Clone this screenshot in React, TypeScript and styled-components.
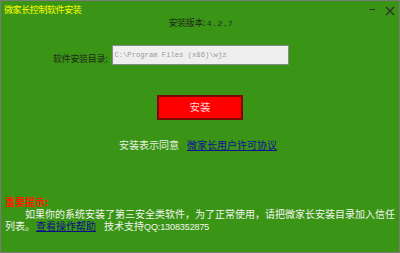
import React from 'react'
import styled, { createGlobalStyle } from 'styled-components'

const GlobalStyle = createGlobalStyle`
	html, body {
		margin: 0;
		padding: 0;
		background: #3a9416;
	}
	body {
		font-family: 'Noto Sans CJK SC', 'Liberation Sans', sans-serif;
	}
`

const Window = styled.div`
	width: 400px;
	height: 253px;
	box-sizing: border-box;
	border: 1px solid #7b7b7b;
	background: #3a9416;
	display: flex;
	flex-direction: column;
	overflow: hidden;
`

const TitleBar = styled.div`
	display: flex;
	justify-content: space-between;
	align-items: flex-start;
	padding: 3px 4px 0 3px;
	height: 12px;
`

const Title = styled.div`
	color: #ffff00;
	font-size: 9px;
	line-height: 12px;
	letter-spacing: -0.4px;
	white-space: nowrap;
`

const Controls = styled.div`
	display: flex;
	align-items: flex-start;
	gap: 9px;
	padding-top: 2px;
`

const Version = styled.div`
	text-align: center;
	font-size: 9px;
	line-height: 14px;
	letter-spacing: -0.4px;
	color: #1f2a18;
	padding-left: 2px;
`

const Mono = styled.span`
	font-family: 'Liberation Mono', monospace;
	font-size: 8px;
	letter-spacing: 0.5px;
`

const DirRow = styled.div`
	display: flex;
	align-items: flex-start;
	gap: 5px;
	margin-top: 14px;
	padding-left: 52px;
`

const Label = styled.div`
	font-size: 9px;
	line-height: 14px;
	letter-spacing: -0.3px;
	color: #1f2a18;
	margin-top: 7px;
	white-space: nowrap;
`

const PathBox = styled.div`
	width: 177px;
	height: 20px;
	box-sizing: border-box;
	border: 1px solid #8a8a8a;
	background: #efefef;
	color: #9a9a9a;
	font-family: 'Liberation Mono', monospace;
	font-size: 7.2px;
	line-height: 18px;
	padding-left: 1px;
	padding-bottom: 2px;
	white-space: nowrap;
	overflow: hidden;
`

const InstallButton = styled.button`
	display: block;
	margin: 29px auto 0;
	width: 86px;
	height: 25px;
	box-sizing: border-box;
	border: 2px solid #7d0a00;
	background: #ff0000;
	color: #ffd6d6;
	font-family: 'Noto Sans CJK SC', sans-serif;
	font-size: 10.5px;
	padding: 0 0 2px;
	cursor: pointer;
`

const Agreement = styled.div`
	display: flex;
	justify-content: center;
	gap: 8px;
	margin-top: 18px;
	font-size: 10px;
	line-height: 14px;
	color: #e9f1e2;
	padding-right: 4px;
`

const Link = styled.a<{ $dark?: boolean }>`
	color: ${({ $dark }) => ($dark ? '#0c0c86' : '#101092')};
	text-decoration: underline;
	cursor: pointer;
`

const Notice = styled.div`
	margin-top: 44px;
	padding: 0 2px 0 4px;
	font-size: 10px;
	line-height: 12px;
	color: #f2f6ee;
`

const NoticeTitle = styled.div`
	color: #ff1a00;
	font-weight: bold;
`

const NoticeText = styled.p`
	margin: 0;
	text-indent: 20px;
`

const Line = styled.span`
	display: inline-block;
	text-indent: 0;
	height: 12px;
	line-height: 12px;
	vertical-align: top;
	white-space: nowrap;
`

const HelpLink = styled(Link)`
	display: inline-block;
	text-indent: 0;
	height: 12px;
	line-height: 12px;
	vertical-align: top;
	margin-left: 1px;
`

const Support = styled(Line)`
	margin-left: 8px;
`

const Digits = styled.span`
	font-family: 'Liberation Sans', sans-serif;
	font-size: 9px;
	letter-spacing: -0.1px;
`

function MinimizeIcon() {
	return (
		<svg width="7" height="10" viewBox="0 0 7 10">
			<line x1="0.5" y1="3.5" x2="6" y2="3.5" stroke="#2b2b2b" strokeWidth="1" />
		</svg>
	)
}

function CloseIcon() {
	return (
		<svg width="10" height="10" viewBox="0 0 10 10">
			<path d="M1 1 L9 9 M9 1 L1 9" stroke="#2b2b2b" strokeWidth="1.1" fill="none" />
		</svg>
	)
}

export default function App() {
	return (
		<>
			<GlobalStyle />
			<Window>
				<TitleBar>
					<Title>微家长控制软件安装</Title>
					<Controls>
						<MinimizeIcon />
						<CloseIcon />
					</Controls>
				</TitleBar>
				<Version>
					安装版本: <Mono>4.2.7</Mono>
				</Version>
				<DirRow>
					<Label>软件安装目录:</Label>
					<PathBox>C:\Program Files (x86)\wjz</PathBox>
				</DirRow>
				<InstallButton>安装</InstallButton>
				<Agreement>
					<span>安装表示同意</span>
					<Link>微家长用户许可协议</Link>
				</Agreement>
				<Notice>
					<NoticeTitle>重要提示:</NoticeTitle>
					<NoticeText>
						<Line>如果你的系统安装了第三安全类软件，为了正常使用，请把微家长安装目录加入信任</Line>
						<Line>列表。</Line>
						<HelpLink $dark>查看操作帮助</HelpLink>
						<Support>
							技术支持<Digits>QQ:1308352875</Digits>
						</Support>
					</NoticeText>
				</Notice>
			</Window>
		</>
	)
}
